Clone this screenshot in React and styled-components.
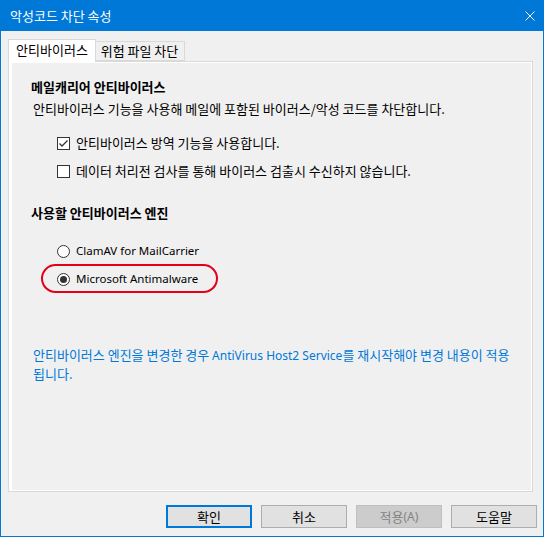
import React from "react";
import styled, { createGlobalStyle } from "styled-components";

const Global = createGlobalStyle`
  html, body { margin: 0; padding: 0; background: #f0f0f0; }
  body { font-family: "Noto Sans CJK KR", "Noto Sans", sans-serif; font-size: 13px; color: #000; }
  * { box-sizing: border-box; }
`;

const Window = styled.div`
  width: 544px;
  height: 537px;
  display: flex;
  flex-direction: column;
  background: #f0f0f0;
  border: 1px solid #0078d7;
  border-top: none;
`;

const TitleBar = styled.div`
  height: 31px;
  background: #0078d7;
  color: #fff;
  display: flex;
  align-items: center;
  justify-content: space-between;
  padding: 0 9px 0 9px;
  margin: 0 -1px;
  font-size: 13px;
  line-height: 16px;
`;

const Title = styled.span`
  padding-left: 1px;
`;

const Content = styled.div`
  flex: 1;
  display: flex;
  flex-direction: column;
  padding: 8px 6px 0 7px;
`;

const TabStrip = styled.div`
  display: flex;
  align-items: flex-start;
  height: 22px;
  position: relative;
  z-index: 1;
`;

const Tab = styled.div`
  display: flex;
  align-items: center;
  justify-content: center;
  font-size: 13px;
  line-height: 16px;
  border: 1px solid #d9d9d9;
  border-bottom: ${(p) => (p.$active ? "none" : "1px solid #d9d9d9")};
  background: ${(p) => (p.$active ? "#fff" : "#f0f0f0")};
  width: ${(p) => p.$w}px;
  height: ${(p) => (p.$active ? 23 : 20)}px;
  margin-top: ${(p) => (p.$active ? 0 : 2)}px;
  margin-left: ${(p) => (p.$active ? 0 : -2)}px;
  padding-bottom: ${(p) => (p.$active ? 2 : 0)}px;
  z-index: ${(p) => (p.$active ? 2 : 1)};
  position: relative;
`;

const Panel = styled.div`
  width: 525px;
  height: 431px;
  border: 1px solid #d9d9d9;
  background: #fff;
  padding: 1px 1px 1px 3px;
  display: flex;
`;

const Page = styled.div`
  flex: 1;
  background: #f0f0f0;
  padding: 16px 0 0 19px;
  display: flex;
  flex-direction: column;
`;

const GroupTitle = styled.div`
  font-weight: 700;
  line-height: 16px;
  margin-top: ${(p) => p.$mt || 0}px;
`;

const Text = styled.div`
  line-height: 16px;
  margin-top: ${(p) => p.$mt || 0}px;
  margin-left: 2px;
`;

const Latin = styled.span`
  font-family: "Noto Sans", sans-serif;
  font-size: ${(p) => p.$size || 12}px;
`;

const Option = styled.label`
  position: relative;
  display: flex;
  align-items: center;
  gap: 6px;
  height: 16px;
  line-height: 16px;
  margin-left: 26px;
  margin-top: ${(p) => p.$mt || 0}px;
`;

const Box = styled.span`
  width: 13px;
  height: 13px;
  border: 1px solid #333;
  background: #fff;
  display: flex;
  align-items: center;
  justify-content: center;
  flex: none;
`;

const Radio = styled.span`
  width: 13px;
  height: 13px;
  border: 1px solid #333;
  border-radius: 50%;
  background: #fff;
  display: flex;
  align-items: center;
  justify-content: center;
  flex: none;
`;

const Dot = styled.span`
  width: 7px;
  height: 7px;
  border-radius: 50%;
  background: #333;
`;

const Highlight = styled.span`
  position: absolute;
  left: -16px;
  top: -7px;
  width: 177px;
  height: 29px;
  border: 2.5px solid #e2001a;
  border-radius: 15px;
  pointer-events: none;
`;

const Info = styled.div`
  color: #0078d7;
  font-size: 13px;
  line-height: 18px;
  margin-top: ${(p) => p.$mt || 0}px;
  margin-left: 2px;
`;

const ButtonRow = styled.div`
  display: flex;
  justify-content: flex-end;
  gap: 9px;
  margin-top: 13px;
`;

const Button = styled.div`
  width: 86px;
  height: 23px;
  display: flex;
  align-items: center;
  justify-content: center;
  font-size: 13px;
  line-height: 16px;
  background: ${(p) => (p.$disabled ? "#cccccc" : "#e1e1e1")};
  color: ${(p) => (p.$disabled ? "#838383" : "#000")};
  border: ${(p) =>
    p.$default ? "2px solid #0078d7" : p.$disabled ? "1px solid #bfbfbf" : "1px solid #adadad"};
`;

const CloseIcon = () => (
  <svg width="10" height="10" viewBox="0 0 10 10">
    <path d="M0.5 0.5 L9.5 9.5 M9.5 0.5 L0.5 9.5" stroke="#fff" strokeWidth="1" fill="none" />
  </svg>
);

const Check = () => (
  <svg width="11" height="11" viewBox="0 0 11 11">
    <polyline points="1.5,5.5 4,8 9.5,2.5" stroke="#333" strokeWidth="1.3" fill="none" />
  </svg>
);

export default function App() {
  return (
    <>
      <Global />
      <Window>
        <TitleBar>
          <Title>악성코드 차단 속성</Title>
          <CloseIcon />
        </TitleBar>
        <Content>
          <TabStrip>
            <Tab $active $w={88}>안티바이러스</Tab>
            <Tab $w={91}>위험 파일 차단</Tab>
          </TabStrip>
          <Panel>
            <Page>
              <GroupTitle>메일캐리어 안티바이러스</GroupTitle>
              <Text $mt={6}>안티바이러스 기능을 사용해 메일에 포함된 바이러스/악성 코드를 차단합니다.</Text>
              <Option $mt={18}>
                <Box>
                  <Check />
                </Box>
                안티바이러스 방역 기능을 사용합니다.
              </Option>
              <Option $mt={12}>
                <Box />
                데이터 처리전 검사를 통해 바이러스 검출시 수신하지 않습니다.
              </Option>
              <GroupTitle $mt={26}>사용할 안티바이러스 엔진</GroupTitle>
              <Option $mt={22}>
                <Radio />
                <Latin $size={11.5}>ClamAV for MailCarrier</Latin>
              </Option>
              <Option $mt={12}>
                <Highlight />
                <Radio>
                  <Dot />
                </Radio>
                <Latin $size={11.5}>Microsoft Antimalware</Latin>
              </Option>
              <Info $mt={59}>
                안티바이러스 엔진을 변경한 경우 <Latin>AntiVirus Host2 Service</Latin>를 재시작해야 변경 내용이 적용
                <br />
                됩니다.
              </Info>
            </Page>
          </Panel>
          <ButtonRow>
            <Button $default>확인</Button>
            <Button>취소</Button>
            <Button $disabled>
              적용<Latin>(A)</Latin>
            </Button>
            <Button>도움말</Button>
          </ButtonRow>
        </Content>
      </Window>
    </>
  );
}
